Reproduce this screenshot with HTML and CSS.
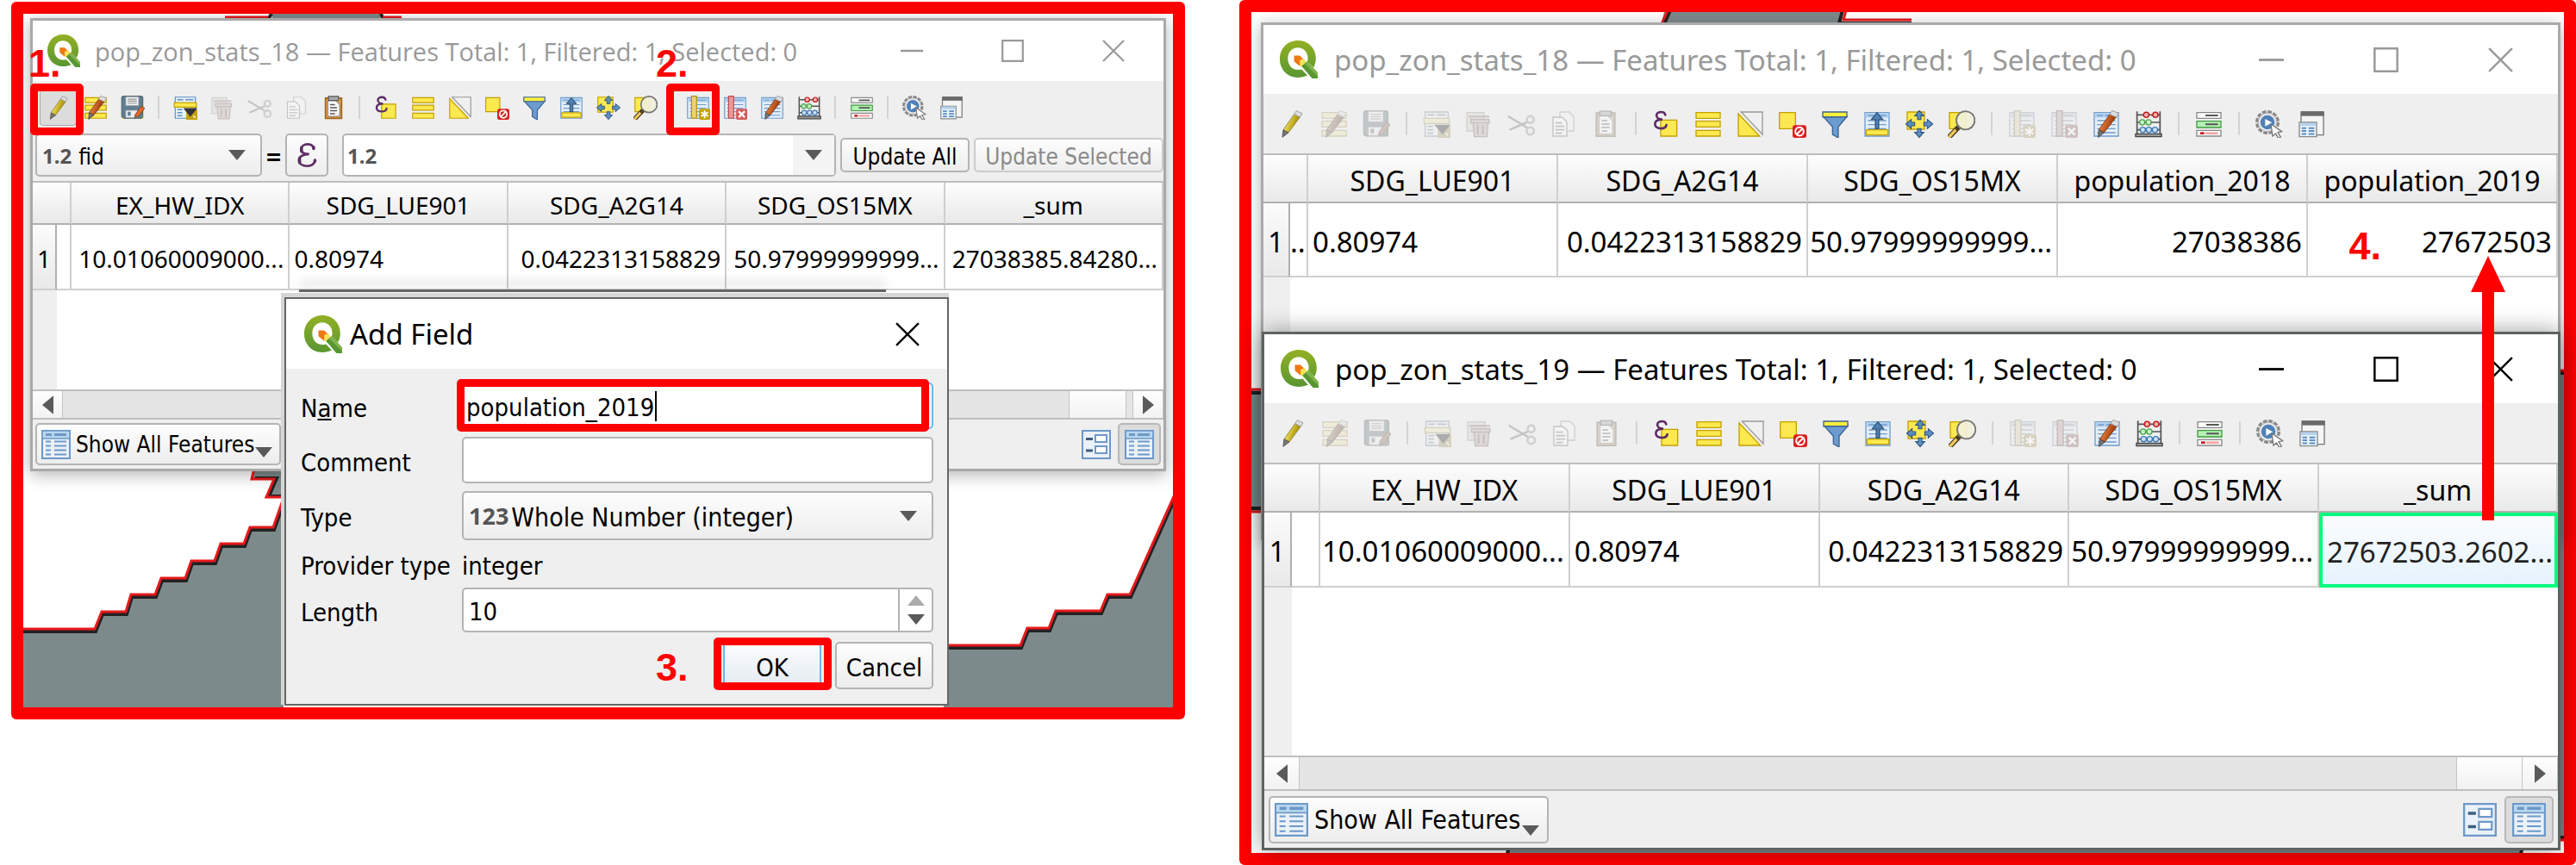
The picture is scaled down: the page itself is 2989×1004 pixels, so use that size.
FILE: index.html
```html
<!DOCTYPE html>
<html lang="en">
<head>
<meta charset="utf-8">
<title>Adding the population_2019 field</title>
<link rel="stylesheet" href="styles.css">
</head>
<body>
<svg class="sprite" aria-hidden="true">
  <defs>
    <linearGradient id="qgreen" x1="0" y1="0" x2="0" y2="1"><stop offset="0" stop-color="#93b023"/><stop offset="1" stop-color="#589632"/></linearGradient>
    <linearGradient id="barrel" x1="0" y1="0" x2="1" y2="0.4"><stop offset="0.2" stop-color="#f6ee6a"/><stop offset="0.8" stop-color="#b39a10"/></linearGradient>
    <linearGradient id="redbarrel" x1="0" y1="0" x2="1" y2="0.4"><stop offset="0.2" stop-color="#f08a4a"/><stop offset="0.8" stop-color="#a8430f"/></linearGradient>
  </defs>
  <symbol id="qgis" viewBox="0 0 40 40">
    <path fill="url(#qgreen)" fill-rule="evenodd" d="M19 0C30 0 38 8 38 19c0 4-1 7-2.500 9.500L29 22c.5-1 .6-2 .6-3.200C29.600 12 25 7.500 19 7.500S8.500 12 8.500 19.200 13 31 19 31c1.500 0 3-.2 4-.6l6 6.400C26 38.200 22.500 39 19 39 8 39 0 30.500 0 19.500S8 0 19 0z"/>
    <path fill="#ee7913" d="M15 16h6l5 5-5 6-6-5z"/>
    <path fill="#f9e05a" d="M21 21l4-2 4 5-5 5-3-3z"/>
    <path fill="#589632" d="M23 27l6-5 11 12v6h-6z"/>
    <path fill="#7fb44a" d="M26 24l3-2 11 12v4z"/>
  </symbol>
  <symbol id="min" viewBox="0 0 26 26"><path d="M0 13h26" stroke="currentColor" stroke-width="2.500"/></symbol>
  <symbol id="max" viewBox="0 0 26 26"><path d="M1.200 1.200h23.600v23.600H1.200z" fill="none" stroke="currentColor" stroke-width="2.200"/></symbol>
  <symbol id="close" viewBox="0 0 26 26"><path d="M1 1l24 24M25 1L1 25" stroke="currentColor" stroke-width="2.200"/></symbol>
  <symbol id="down" viewBox="0 0 20 12"><path d="M0 0h20L10 12z" fill="#5a5a5a"/></symbol>

  <symbol id="pencil" viewBox="0 0 24 24">
    <path fill="url(#barrel)" stroke="#8f8540" stroke-width=".7" d="M14 3.500l5 2.500L9 19.500 4.500 17z"/>
    <path fill="#ddd" stroke="#999" stroke-width=".7" d="M14 3.500L16 .5l5 2.300L19 6z"/>
    <path fill="#777" stroke="#555" stroke-width=".7" d="M4.500 17L9 19.500l-5.300 4z"/>
  </symbol>
  <symbol id="redpencil" viewBox="0 0 24 24">
    <path fill="url(#redbarrel)" stroke="#7c3a17" stroke-width=".7" d="M15 3.500l5.500 2.500L10 19.500 5.500 17z"/>
    <path fill="#ddd" stroke="#999" stroke-width=".7" d="M15 3.500L17 .3l6 2.300L20.500 6z"/>
    <path fill="#777" stroke="#444" stroke-width=".7" d="M5.500 17l4.500 2.500-5 4z"/>
  </symbol>
  <symbol id="bars" viewBox="0 0 24 24"><path fill="#fce94f" stroke="#c4a000" d="M1.500 2h21v5h-21zM1.500 9.500h21v5h-21zM1.500 17.500h21v5h-21z"/></symbol>
  <symbol id="multi" viewBox="0 0 24 24"><use href="#bars"/><use href="#redpencil"/></symbol>
  <symbol id="save" viewBox="0 0 24 24">
    <path fill="#fcf04f" d="M1 1h22v22H1z"/>
    <path fill="#5f7f95" stroke="#3d5666" stroke-width=".8" d="M1 2q0-1.500 1.500-1.500h18Q22 .5 22 2v19q0 1.500-1.500 1.500H3L1 21z"/>
    <path fill="#eee" stroke="#889" stroke-width=".6" d="M5 1h13v9H5zM5 14.500h12v7.500H5z"/>
    <path stroke="#999" d="M7 3.500h9M7 5.500h9M7 7.500h9"/><path fill="#5f7f95" d="M7 16h3v4H7z"/>
    <path fill="#e0682c" stroke="#7c3a17" stroke-width=".7" d="M20.500 10.500l3.500 2-7 9-3-2z"/><path fill="#666" d="M14 19.500l3 2-3.500 2z"/>
  </symbol>
  <symbol id="sheet" viewBox="0 0 24 24">
    <path fill="#e4eef8" stroke="#6f9ccb" d="M1.500 2h21v20.500h-21z"/><path fill="#b3d1ee" d="M2 2.500h20v4H2z"/>
    <path stroke="#6f9ccb" d="M4 4.500h5M11 4.500h9M4 9h16M4 12.500h16M4 16h16M4 19.500h16"/>
  </symbol>
  <symbol id="addrow" viewBox="0 0 24 24">
    <path fill="#eaf2fa" stroke="#5d8fc2" d="M2 1.500h20v21H2z"/><path stroke="#5d8fc2" stroke-width="1.300" d="M4 4h6M12 4h8M4 14h5M4 17h5M4 20h5"/>
    <path fill="#fce94f" stroke="#c4a000" d="M1 7h22v4.500H1z"/><path fill="#c4a000" d="M13 14h11v10H13z"/>
    <path fill="#333" d="M10 12.500h14l-7 8.500z"/><path stroke="#fff" stroke-width="1.200" d="M20 20l2 2"/>
  </symbol>
  <symbol id="trash" viewBox="0 0 24 24">
    <path fill="#d9d3c3" stroke="#aaa08c" d="M1.500 2h15v16h-15z"/><path stroke="#b5837d" stroke-width="2" d="M3 5.500h18"/>
    <path fill="#dca9a4" stroke="#a5605a" d="M5 8h16v3H5zM7 11h13l-1 12H8z"/><path stroke="#a5605a" stroke-width="1.500" d="M11 13v8M15.500 13v8"/>
  </symbol>
  <symbol id="cut" viewBox="0 0 24 24">
    <path fill="none" stroke="#777" stroke-width="1.800" d="M.5 5L18 15.500M2 17l16-7"/>
    <g fill="none" stroke="#999" stroke-width="2"><circle cx="20" cy="8" r="3"/><circle cx="20" cy="18" r="3.200"/></g>
  </symbol>
  <symbol id="copy" viewBox="0 0 24 24">
    <path fill="#f7f7f7" stroke="#999" d="M9 1.500h8l4 4V18H9z"/><path fill="#fff" stroke="#777" d="M3 6h8l4 4v12.500H3z"/>
    <path stroke="#777" stroke-width="1.200" d="M5 11h6M5 14h8M5 17h8M5 20h6"/>
  </symbol>
  <symbol id="paste" viewBox="0 0 24 24">
    <path fill="#d9a35a" stroke="#a5651c" stroke-width="1.500" d="M4 2.500h16v20H4z"/><path fill="#fff" stroke="#777" stroke-width=".7" d="M6.500 5H14l4 4v11.500H6.500z"/>
    <path fill="#aaa" stroke="#555" d="M7 .8h10v4H7z"/><path stroke="#555" stroke-width="1.200" d="M8.500 9h5M8.500 12h7M8.500 15h7M8.500 18h5"/>
  </symbol>
  <symbol id="eps" viewBox="0 0 24 26">
    <path fill="none" stroke="#5c2d62" stroke-width="2.400" stroke-linecap="round" d="M19.500 6C18.500 2 15.500 1.300 13 1.300 9 1.300 6 3.500 6 6.800S9 12 14.500 12C8 12 3.500 14.500 3.500 18.500s4 6.200 9 6.200c4 0 7.500-2 8.500-6"/>
    <path fill="none" stroke="#5c2d62" stroke-width="3.200" stroke-linecap="round" d="M6.300 5v4M4.300 16.500v4.500M19.300 4.500v1.500M20.700 18.500v1"/>
  </symbol>
  <symbol id="selexp" viewBox="0 0 24 24">
    <path fill="#fce94f" stroke="#c4a000" d="M7.500 8.500h14v14h-14z"/>
    <path fill="none" stroke="#5c2d62" stroke-width="2" stroke-linecap="round" d="M11.500 4C11 2 9.500 1.500 8 1.500 5.500 1.500 3.800 2.500 3.800 4.500S6 8 9 8C5 8 2.500 9.500 2.500 12s2.500 3.800 5.500 3.800c2.500 0 4-1 4.500-3"/>
  </symbol>
  <symbol id="invert" viewBox="0 0 24 24"><path fill="#fce94f" stroke="#c4a000" d="M1.500 3v19.500H20z"/><path fill="#f0f0f0" stroke="#999" d="M4 1.500h18.500V21z"/></symbol>
  <symbol id="desel" viewBox="0 0 24 24">
    <path fill="#fce94f" stroke="#c4a000" d="M.5 2h14v14H.5z"/><rect x="12" y="13" width="12" height="11" rx="2" fill="#dc2020"/>
    <circle cx="18" cy="18.500" r="3.600" fill="none" stroke="#fff" stroke-width="1.500"/><path stroke="#fff" stroke-width="1.500" d="M15.500 21l5-5"/>
  </symbol>
  <symbol id="funnel" viewBox="0 0 24 24">
    <path fill="#6c9bd0" stroke="#3b628f" d="M2 5.500l8 9V21l5 3v-9.500l7.500-9z"/><path fill="#fcee3f" stroke="#3b628f" d="M1.500 1.500h21v4.300h-21z"/>
  </symbol>
  <symbol id="totop" viewBox="0 0 24 24">
    <use href="#sheet"/><path fill="#fce94f" stroke="#c4a000" d="M2.500 17h19v4.500h-19z"/><path fill="#4d7fb3" stroke="#28486a" stroke-width=".8" d="M12 2l5 6h-3.500v8h-3V8H7z"/>
  </symbol>
  <symbol id="pan" viewBox="0 0 24 24">
    <path fill="#fce94f" stroke="#c4a000" d="M1.500 1.500h15v15h-15z"/>
    <path fill="#5d8fc2" stroke="#2c527c" stroke-width=".8" d="M12 .3l4 4.500h-2.500V8h-3V4.800H8zM12 23.700l4-4.500h-2.500V16h-3v3.200H8zM.3 12L5 8v2.500h3v3H5V16zM23.700 12L19 8v2.500h-3v3h3V16z"/>
  </symbol>
  <symbol id="zoomto" viewBox="0 0 24 24">
    <path fill="#fce94f" stroke="#c4a000" d="M1.500 2h14v14h-14z"/><path stroke="#4d3d20" stroke-width="4.500" d="M9.500 14.500L1 23.500"/><path stroke="#f0c860" stroke-width="2.500" d="M7 17l-6 6.500"/>
    <circle cx="15.500" cy="8.800" r="8" fill="#f1f0da" fill-opacity=".92" stroke="#777" stroke-width="1.400"/>
  </symbol>
  <symbol id="newfield" viewBox="0 0 24 24">
    <use href="#sheet"/><path fill="#ead46a" stroke="#b08f10" d="M5.500.5h5v22h-5z"/><rect x="13" y="13" width="11" height="11" rx="1.500" fill="#c4a000"/>
    <path stroke="#fff" stroke-width="1.600" d="M18.500 14.500v8M15 16.500l7 4M15 20.500l7-4"/>
  </symbol>
  <symbol id="delfield" viewBox="0 0 24 24">
    <use href="#sheet"/><path fill="#eb9a9a" stroke="#c24a4a" d="M5.500.5h5v22h-5z"/><rect x="13" y="13" width="11" height="11" rx="1.500" fill="#d65a5a"/>
    <path stroke="#fff" stroke-width="2" d="M15.500 15.500l6 6M21.500 15.500l-6 6"/>
  </symbol>
  <symbol id="edittable" viewBox="0 0 24 24"><use href="#sheet"/><use href="#redpencil"/></symbol>
  <symbol id="abacus" viewBox="0 0 24 24">
    <path fill="none" stroke="#555" stroke-width="1.300" d="M2 1v21M22 1v21M2 4h20M2 10.500h20M2 17h20"/><path fill="#999" stroke="#444" d="M.7 20.500h22.600V23H.7z"/>
    <g fill="#f3b1b1" stroke="#c21515"><circle cx="10" cy="4" r="2.300"/><circle cx="18" cy="4" r="2.300"/></g>
    <g fill="#c9f2c9" stroke="#4aa54a"><circle cx="6.500" cy="10.500" r="2.300"/><circle cx="12" cy="10.500" r="2.300"/></g>
    <g fill="#cfe2f5" stroke="#3d78b3"><circle cx="7" cy="17" r="2.300"/><circle cx="12.300" cy="17" r="2.300"/><circle cx="17.600" cy="17" r="2.300"/></g>
  </symbol>
  <symbol id="cond" viewBox="0 0 24 24">
    <path fill="#fff" stroke="#888" d="M1.500 2h21v5h-21zM1.500 17.500h21v5h-21z"/><path fill="#b5f2b5" stroke="#3f9c3f" d="M1.500 9.500h21v5.500h-21z"/>
    <path stroke="#555" stroke-width="1.500" d="M9 4.500h11M9 12.200h11"/><path stroke="#c21515" stroke-width="2" d="M4.500 20h3.500"/><path stroke="#f7a5a5" stroke-width="2" d="M9 20h11"/>
  </symbol>
  <symbol id="actions" viewBox="0 0 24 24">
    <circle cx="10.500" cy="10.500" r="9" fill="none" stroke="#888" stroke-width="3" stroke-dasharray="3.500 1.200"/><circle cx="10.500" cy="10.500" r="8.200" fill="#e9e9e9" stroke="#999" stroke-width=".6"/>
    <circle cx="10.500" cy="10.500" r="6.200" fill="#4f81b8"/><path fill="#fff" d="M8.500 7.500l6 3.200-6 3.300z"/>
    <path fill="#fff" stroke="#777" d="M13.500 12l9.500 6.500-3.500.8 2.500 4-2 1-2.300-4-2.700 2.200z"/>
  </symbol>
  <symbol id="dock" viewBox="0 0 24 24">
    <path fill="#f5f5f5" stroke="#777" d="M3 1.500h19.500v20H3z"/><path fill="#6a6a6a" d="M3 1h20v4H3z"/><path fill="#eaf3fb" stroke="#888" d="M1.500 10.500h15v12.500h-15z"/>
    <path fill="#b5d3f0" d="M2 11h14v2.500H2z"/><path stroke="#5d8fc2" stroke-width="1.500" d="M3.500 15.500h4M9.500 15.500h5M3.500 18h4M9.500 18h5M3.500 20.700h4M9.500 20.700h5"/>
  </symbol>
  <symbol id="formview" viewBox="0 0 34 34">
    <path fill="#eaf1f8" stroke="#6c99c8" stroke-width="2" d="M1 1h32v32H1z"/><path fill="#fff" stroke="#6c99c8" stroke-width="2" d="M16 6h13v8H16zM16 19h13v8H16z"/><path stroke="#3e5f80" stroke-width="3" d="M5 10.500h8M5 24h8"/>
  </symbol>
  <symbol id="tableview" viewBox="0 0 34 34">
    <path fill="#eaf1f8" stroke="#6c99c8" stroke-width="2" d="M1 1h32v32H1z"/><path fill="#b9d6ee" stroke="#6c99c8" stroke-width="1.500" d="M1 1h32v9H1z"/>
    <path stroke="#6c99c8" stroke-width="3" d="M5 5.500h7M15 5.500h14"/><path stroke="#6c99c8" stroke-width="1.800" d="M5 13.500h6M15 13.500h14M5 18.500h6M15 18.500h14M5 23.500h6M15 23.500h14M5 28.500h6M15 28.500h14"/>
  </symbol>
</svg>

<main class="board">
  <section class="figure figure-left" aria-label="Add the field">
    <svg class="map" aria-hidden="true">
      <path class="land" d="M289 0h125v8H289z"/><path class="rim" d="M233 7h51l4-7M440 7h-22l-3-7"/><path class="coast" d="M234 4h50M417 4h22"/>
      <g transform="translate(-27 -16)">
        <path class="land" d="M295 540l-3 16h26l-9 21h30v-40z"/><path class="land" d="M27 730h83l8-20h28l6-20h28l7-19h28l7-20h27l7-20h27l7-19h27l12-34v260H27z"/>
        <path class="rim" d="M27 733h84l8-20h28l6-20h28l7-19h28l7-20h27l7-20h27l7-19h27l12-34M296 555h25l-9 21h25"/>
        <path class="coast" d="M27 730h83l8-20h28l6-20h28l7-19h28l7-20h27l7-20h27l7-19h27l12-34M296 540l-4 16h26l-9 21h30"/>
        <path class="land" d="M1095 749h89l8-20h25l8-20h52l8-19h26l52-116v260h-268z"/>
        <path class="rim" d="M1095 752h90l8-20h25l8-20h52l8-19h26l52-116"/><path class="coast" d="M1095 749h89l8-20h25l8-20h52l8-19h26l52-116"/>
      </g>
    </svg>

    <article class="window small">
      <header class="titlebar">
        <svg class="logo"><use href="#qgis"/></svg><h2>pop_zon_stats_18 — Features Total: 1, Filtered: 1, Selected: 0</h2>
        <button class="wbtn" aria-label="Minimize"><svg><use href="#min"/></svg></button><button class="wbtn" aria-label="Maximize"><svg><use href="#max"/></svg></button><button class="wbtn" aria-label="Close"><svg><use href="#close"/></svg></button>
      </header>
      <nav class="toolbar">
        <button class="tool pressed" aria-label="Toggle editing"><svg><use href="#pencil"/></svg></button>
        <button class="tool" aria-label="Multi edit"><svg><use href="#multi"/></svg></button>
        <button class="tool" aria-label="Save edits"><svg><use href="#save"/></svg></button>
        <i class="sep"></i>
        <button class="tool" aria-label="Add feature"><svg><use href="#addrow"/></svg></button>
        <button class="tool" disabled aria-label="Delete"><svg><use href="#trash"/></svg></button>
        <button class="tool" disabled aria-label="Cut"><svg><use href="#cut"/></svg></button>
        <button class="tool" disabled aria-label="Copy"><svg><use href="#copy"/></svg></button>
        <button class="tool" aria-label="Paste"><svg><use href="#paste"/></svg></button>
        <i class="sep"></i>
        <button class="tool" aria-label="Select by expression"><svg><use href="#selexp"/></svg></button>
        <button class="tool" aria-label="Select all"><svg><use href="#bars"/></svg></button>
        <button class="tool" aria-label="Invert selection"><svg><use href="#invert"/></svg></button>
        <button class="tool" aria-label="Deselect all"><svg><use href="#desel"/></svg></button>
        <button class="tool" aria-label="Filter"><svg><use href="#funnel"/></svg></button>
        <button class="tool" aria-label="Move selection to top"><svg><use href="#totop"/></svg></button>
        <button class="tool" aria-label="Pan to selection"><svg><use href="#pan"/></svg></button>
        <button class="tool" aria-label="Zoom to selection"><svg><use href="#zoomto"/></svg></button>
        <i class="sep"></i>
        <button class="tool" aria-label="New field"><svg><use href="#newfield"/></svg></button>
        <button class="tool" aria-label="Delete field"><svg><use href="#delfield"/></svg></button>
        <button class="tool" aria-label="Organize columns"><svg><use href="#edittable"/></svg></button>
        <button class="tool" aria-label="Field calculator"><svg><use href="#abacus"/></svg></button>
        <i class="sep"></i>
        <button class="tool" aria-label="Conditional formatting"><svg><use href="#cond"/></svg></button>
        <i class="sep"></i>
        <button class="tool" aria-label="Actions"><svg><use href="#actions"/></svg></button>
        <button class="tool" aria-label="Dock table"><svg><use href="#dock"/></svg></button>
      </nav>
      <div class="calc">
        <label class="box combo fieldpick"><b class="kind">1.2</b><select aria-label="Field"><option>fid</option></select><svg class="down"><use href="#down"/></svg></label>
        <span class="equals">=</span>
        <button class="box epsilon" aria-label="Expression"><svg><use href="#eps"/></svg></button>
        <label class="box combo expr"><b class="kind">1.2</b><input type="text" aria-label="Expression value"><span class="drop"><svg class="down"><use href="#down"/></svg></span></label>
        <button class="box update all">Update All</button>
        <button class="box update" disabled>Update Selected</button>
      </div>
      <table>
        <colgroup><col class="num"><col class="stub"><col><col><col><col><col></colgroup>
        <thead><tr><th colspan="2"></th><th>EX_HW_IDX</th><th>SDG_LUE901</th><th>SDG_A2G14</th><th>SDG_OS15MX</th><th>_sum</th></tr></thead>
        <tbody><tr><th>1</th><td></td><td>10.01060009000...</td><td class="text">0.80974</td><td>0.0422313158829</td><td>50.97999999999...</td><td>27038385.84280...</td></tr></tbody>
      </table>
      <div class="empty"></div>
      <div class="scroll"><button aria-label="Scroll left"><svg viewBox="0 0 12 20"><path d="M12 0v20L0 10z" fill="#5a5a5a"/></svg></button><span class="track"></span><span class="thumb"></span><span class="gap"></span><button aria-label="Scroll right"><svg viewBox="0 0 12 20"><path d="M0 0v20l12-10z" fill="#5a5a5a"/></svg></button></div>
      <footer class="status">
        <button class="box showall"><svg class="view"><use href="#tableview"/></svg>Show All Features<svg class="down low"><use href="#down"/></svg></button>
        <button class="viewbtn" aria-label="Form view"><svg class="view"><use href="#formview"/></svg></button><button class="viewbtn on" aria-label="Table view"><svg class="view"><use href="#tableview"/></svg></button>
      </footer>
    </article>

    <div class="under-edge"></div>
    <form class="dialog" onsubmit="return false">
      <header class="titlebar"><svg class="logo"><use href="#qgis"/></svg><h2>Add Field</h2><button type="button" class="wbtn" aria-label="Close"><svg><use href="#close"/></svg></button></header>
      <div class="form">
        <label for="name">N<u>a</u>me</label><input id="name" class="box focus" type="text" value="population_2019">
        <label for="comment">Comment</label><input id="comment" class="box" type="text">
        <label for="type">Type</label><span class="box combo"><b class="kind">123</b><select id="type"><option>Whole Number (integer)</option></select><svg class="down"><use href="#down"/></svg></span>
        <span>Provider type</span><span>integer</span>
        <label for="length">Length</label><span class="box spin"><input id="length" type="text" value="10"><span class="steps"><svg class="down up"><use href="#down"/></svg><svg class="down"><use href="#down"/></svg></span></span>
      </div>
      <div class="actions"><button class="box ok">OK</button><button class="box" type="button">Cancel</button></div>
    </form>
    <i class="caret"></i>
    <i class="mark m-edit"></i><i class="mark m-new"></i><i class="mark m-name"></i><i class="mark m-ok"></i>
    <b class="step s1">1.</b><b class="step s2">2.</b><b class="step s3">3.</b>
  </section>

  <section class="figure figure-right" aria-label="Copy the value">
    <svg class="map" aria-hidden="true">
      <g transform="translate(-1452 -14)">
        <path class="land" d="M1932 10h208l-5 20h-208zM1440 452h40v142h-40zM2960 430h30v545h-30zM1750 980h1175v15H1750z"/>
        <path class="rim" d="M1938 12l-8 18M2138 12l-4 15h84M1440 456h40M1440 590h40M2960 433h30M2960 972h30M1752 980l-4 14M2928 980l-4 14"/>
        <path class="coast" d="M1935 12l-8 18M2142 12l-3 11h79M1440 452h40M1440 594h40M2960 430h30M2960 975h30"/>
      </g>
    </svg>
    <article class="window back">
      <header class="titlebar">
        <svg class="logo"><use href="#qgis"/></svg><h2>pop_zon_stats_18 — Features Total: 1, Filtered: 1, Selected: 0</h2>
        <button class="wbtn" aria-label="Minimize"><svg><use href="#min"/></svg></button><button class="wbtn" aria-label="Maximize"><svg><use href="#max"/></svg></button><button class="wbtn" aria-label="Close"><svg><use href="#close"/></svg></button>
      </header>
      <nav class="toolbar">
        <button class="tool" aria-label="Toggle editing"><svg><use href="#pencil"/></svg></button>
        <button class="tool" disabled aria-label="Multi edit"><svg><use href="#multi"/></svg></button>
        <button class="tool" disabled aria-label="Save edits"><svg><use href="#save"/></svg></button>
        <i class="sep"></i>
        <button class="tool" disabled aria-label="Add feature"><svg><use href="#addrow"/></svg></button>
        <button class="tool" disabled aria-label="Delete"><svg><use href="#trash"/></svg></button>
        <button class="tool" disabled aria-label="Cut"><svg><use href="#cut"/></svg></button>
        <button class="tool" disabled aria-label="Copy"><svg><use href="#copy"/></svg></button>
        <button class="tool" disabled aria-label="Paste"><svg><use href="#paste"/></svg></button>
        <i class="sep"></i>
        <button class="tool" aria-label="Select by expression"><svg><use href="#selexp"/></svg></button>
        <button class="tool" aria-label="Select all"><svg><use href="#bars"/></svg></button>
        <button class="tool" aria-label="Invert selection"><svg><use href="#invert"/></svg></button>
        <button class="tool" aria-label="Deselect all"><svg><use href="#desel"/></svg></button>
        <button class="tool" aria-label="Filter"><svg><use href="#funnel"/></svg></button>
        <button class="tool" aria-label="Move selection to top"><svg><use href="#totop"/></svg></button>
        <button class="tool" aria-label="Pan to selection"><svg><use href="#pan"/></svg></button>
        <button class="tool" aria-label="Zoom to selection"><svg><use href="#zoomto"/></svg></button>
        <i class="sep"></i>
        <button class="tool" disabled aria-label="New field"><svg><use href="#newfield"/></svg></button>
        <button class="tool" disabled aria-label="Delete field"><svg><use href="#delfield"/></svg></button>
        <button class="tool" aria-label="Organize columns"><svg><use href="#edittable"/></svg></button>
        <button class="tool" aria-label="Field calculator"><svg><use href="#abacus"/></svg></button>
        <i class="sep"></i>
        <button class="tool" aria-label="Conditional formatting"><svg><use href="#cond"/></svg></button>
        <i class="sep"></i>
        <button class="tool" aria-label="Actions"><svg><use href="#actions"/></svg></button>
        <button class="tool" aria-label="Dock table"><svg><use href="#dock"/></svg></button>
      </nav>
      <table>
        <colgroup><col class="num"><col class="stub"><col><col><col><col><col></colgroup>
        <thead><tr><th colspan="2"></th><th>SDG_LUE901</th><th>SDG_A2G14</th><th>SDG_OS15MX</th><th>population_2018</th><th>population_2019</th></tr></thead>
        <tbody><tr><th>1</th><td>..</td><td class="text">0.80974</td><td>0.0422313158829</td><td>50.97999999999...</td><td>27038386</td><td>27672503</td></tr></tbody>
      </table>
      <div class="empty"></div>
    </article>

    <article class="window front">
      <header class="titlebar">
        <svg class="logo"><use href="#qgis"/></svg><h2>pop_zon_stats_19 — Features Total: 1, Filtered: 1, Selected: 0</h2>
        <button class="wbtn" aria-label="Minimize"><svg><use href="#min"/></svg></button><button class="wbtn" aria-label="Maximize"><svg><use href="#max"/></svg></button><button class="wbtn" aria-label="Close"><svg><use href="#close"/></svg></button>
      </header>
      <nav class="toolbar">
        <button class="tool" aria-label="Toggle editing"><svg><use href="#pencil"/></svg></button>
        <button class="tool" disabled aria-label="Multi edit"><svg><use href="#multi"/></svg></button>
        <button class="tool" disabled aria-label="Save edits"><svg><use href="#save"/></svg></button>
        <i class="sep"></i>
        <button class="tool" disabled aria-label="Add feature"><svg><use href="#addrow"/></svg></button>
        <button class="tool" disabled aria-label="Delete"><svg><use href="#trash"/></svg></button>
        <button class="tool" disabled aria-label="Cut"><svg><use href="#cut"/></svg></button>
        <button class="tool" disabled aria-label="Copy"><svg><use href="#copy"/></svg></button>
        <button class="tool" disabled aria-label="Paste"><svg><use href="#paste"/></svg></button>
        <i class="sep"></i>
        <button class="tool" aria-label="Select by expression"><svg><use href="#selexp"/></svg></button>
        <button class="tool" aria-label="Select all"><svg><use href="#bars"/></svg></button>
        <button class="tool" aria-label="Invert selection"><svg><use href="#invert"/></svg></button>
        <button class="tool" aria-label="Deselect all"><svg><use href="#desel"/></svg></button>
        <button class="tool" aria-label="Filter"><svg><use href="#funnel"/></svg></button>
        <button class="tool" aria-label="Move selection to top"><svg><use href="#totop"/></svg></button>
        <button class="tool" aria-label="Pan to selection"><svg><use href="#pan"/></svg></button>
        <button class="tool" aria-label="Zoom to selection"><svg><use href="#zoomto"/></svg></button>
        <i class="sep"></i>
        <button class="tool" disabled aria-label="New field"><svg><use href="#newfield"/></svg></button>
        <button class="tool" disabled aria-label="Delete field"><svg><use href="#delfield"/></svg></button>
        <button class="tool" aria-label="Organize columns"><svg><use href="#edittable"/></svg></button>
        <button class="tool" aria-label="Field calculator"><svg><use href="#abacus"/></svg></button>
        <i class="sep"></i>
        <button class="tool" aria-label="Conditional formatting"><svg><use href="#cond"/></svg></button>
        <i class="sep"></i>
        <button class="tool" aria-label="Actions"><svg><use href="#actions"/></svg></button>
        <button class="tool" aria-label="Dock table"><svg><use href="#dock"/></svg></button>
      </nav>
      <table>
        <colgroup><col class="num"><col class="stub"><col><col><col><col><col class="last"></colgroup>
        <thead><tr><th colspan="2"></th><th>EX_HW_IDX</th><th>SDG_LUE901</th><th>SDG_A2G14</th><th>SDG_OS15MX</th><th>_sum</th></tr></thead>
        <tbody><tr><th>1</th><td></td><td>10.01060009000...</td><td class="text">0.80974</td><td>0.0422313158829</td><td>50.97999999999...</td><td class="current">27672503.2602...</td></tr></tbody>
      </table>
      <div class="empty"></div>
      <div class="scroll"><button aria-label="Scroll left"><svg viewBox="0 0 12 20"><path d="M12 0v20L0 10z" fill="#5a5a5a"/></svg></button><span class="track"></span><span class="thumb"></span><button aria-label="Scroll right"><svg viewBox="0 0 12 20"><path d="M0 0v20l12-10z" fill="#5a5a5a"/></svg></button></div>
      <footer class="status">
        <button class="box showall"><svg class="view"><use href="#tableview"/></svg>Show All Features<svg class="down low"><use href="#down"/></svg></button>
        <button class="viewbtn" aria-label="Form view"><svg class="view"><use href="#formview"/></svg></button><button class="viewbtn on" aria-label="Table view"><svg class="view"><use href="#tableview"/></svg></button>
      </footer>
    </article>
    <b class="step s4">4.</b>
    <svg class="arrow" viewBox="0 0 42 307" aria-hidden="true"><path fill="#f00" d="M21 0l20 42H28v265H14V42H1z"/></svg>
  </section>
</main>
</body>
</html>
```
FILE: styles.css
```css
* { box-sizing: border-box; }
body { margin: 0; background: #fff; color: #000; }
button, input, select { font: inherit; color: inherit; margin: 0; padding: 0; border: 0; background: none; appearance: none; }
.sprite { position: absolute; width: 0; height: 0; }
h2 { margin: 0; font-weight: 400; white-space: nowrap; }

.board {
  display: grid;
  grid-template-columns: 1362fr 1551fr;
  gap: 63px;
  align-items: start;
  padding-left: 13px;
}
.figure {
  position: relative;
  border: 14px solid #f00;
  border-radius: 6px;
  background: #fff;
}
.figure-left { margin-top: 2px; min-height: 833px; padding: 5px 8px; }
.figure-right { min-height: 1004px; padding: 12px 4px 0 11px; }
.map { position: absolute; inset: 0; width: 100%; height: 100%; }
.land { fill: #7d8a8c; }
.rim { fill: none; stroke: #222; stroke-width: 4px; }
.coast { fill: none; stroke: #e8191c; stroke-width: 3px; }

/* attribute table windows */
.window {
  --title: 80px; --tools: 69px; --pitch: 49px; --sep: 21px; --icon: 32px;
  --logo: 44px; --inset: 19px; --ctl: 29px; --ctlw: 133px;
  --head: 58px; --row: 86px; --num: 31px; --stub: 21px;
  --bar: 41px; --arrowbtn: 41px; --thumb: 77px; --view: 39px; --viewbtn: 57px;
  position: relative;
  display: flex;
  flex-direction: column;
  border: 3px solid #a9a9a9;
  background: #efefef;
  box-shadow: 0 4px 18px rgba(0, 0, 0, .3);
  font: 32px "Noto Sans", "Open Sans", sans-serif;
}
.small {
  --title: 70px; --tools: 61px; --pitch: 43px; --sep: 18px; --icon: 28px;
  --logo: 38px; --inset: 17px; --ctl: 26px; --ctlw: 117px;
  --head: 51px; --row: 76px; --num: 28px; --stub: 17px;
  --bar: 35px; --arrowbtn: 35px; --thumb: 67px; --view: 34px; --viewbtn: 50px;
  font-size: 28px;
  height: 526px;
}
.back { height: 601px; }
.front {
  --num: 32px; --stub: 33px; --row: 87px;
  position: absolute;
  top: 371px; bottom: 3px; left: 12px; right: 4px;
  border-color: #5d6263;
  box-shadow: 0 0 26px rgba(0, 0, 0, .4);
}

.titlebar { display: flex; align-items: center; flex: none; height: var(--title); padding-left: var(--inset); gap: var(--inset); background: #fff; color: #999; }
.titlebar h2 { flex: 1; font-size: 33px; }
.small .titlebar h2 { font-size: 29px; font-family: "Open Sans", "Noto Sans", sans-serif; }
.front .titlebar { color: #000; }
.logo { width: var(--logo); height: var(--logo); flex: none; }
.wbtn { width: var(--ctlw); height: 100%; display: grid; place-items: center; margin-left: calc(var(--inset) * -1); }
.wbtn svg { width: var(--ctl); height: var(--ctl); }

.toolbar { display: flex; align-items: center; flex: none; height: var(--tools); padding-left: 8px; }
.tool { width: var(--pitch); height: var(--pitch); flex: none; display: grid; place-items: center; }
.tool svg { width: var(--icon); height: var(--icon); }
.tool:disabled svg { opacity: .35; filter: grayscale(.7); }
.tool.pressed { background: #dcdcdc; border: 1px solid #aaa; border-radius: 4px; }
.sep { width: var(--sep); height: 27px; flex: none; background: linear-gradient(#d4d4d4, #d4d4d4) center / 2px 100% no-repeat; }

.box { border: 2px solid #b4b4b4; border-radius: 5px; background: linear-gradient(#fdfdfd, #ededed); font-family: "DejaVu Sans Condensed", "DejaVu Sans", sans-serif; white-space: nowrap; }
.calc { display: flex; align-items: center; flex: none; height: 55px; padding: 0 0 5px 3px; font-size: 26px; font-family: "DejaVu Sans Condensed", "DejaVu Sans", sans-serif; }
.calc .combo, .epsilon { height: 50px; }
.combo { display: flex; align-items: center; }
.combo select, .combo input { flex: 1; min-width: 0; height: 100%; padding-top: 4px; outline: 0; }
.fieldpick { width: 263px; padding: 0 17px 0 6px; gap: 8px; }
.kind { font: 700 24px "Noto Sans", sans-serif; color: #555; }
.down { width: 20px; height: 12px; flex: none; }
.equals { width: 27px; text-align: center; padding-top: 4px; font-weight: 700; }
.epsilon { width: 50px; margin-right: 16px; display: grid; place-items: center; }
.epsilon svg { width: 26px; height: 30px; }
.expr { flex: 1; background: #fff; padding-left: 4px; margin-right: 5px; }
.drop { width: 48px; height: 100%; display: grid; place-items: center; background: #f4f4f4; }
.update { width: 220px; height: 40px; padding-top: 3px; }
.update.all { width: 150px; margin-right: 5px; }
.update:disabled { color: #8a8a8a; border-color: #ccc; }

table { width: 100%; flex: none; table-layout: fixed; border-collapse: separate; border-spacing: 0; border-top: 2px solid #bdbdbd; background: #fff; }
.num { width: var(--num); }
.stub { width: var(--stub); }
.last { width: 277px; }
th, td { padding: 0; font-weight: 400; white-space: nowrap; border-right: 2px solid #cfcfcf; border-bottom: 2px solid #cfcfcf; }
thead th { height: calc(var(--head) - 2px); padding-top: 4px; background: linear-gradient(#fdfdfd, #e9e9e9); border-bottom-color: #b0b0b0; }
tbody th { height: var(--row); padding-top: 4px; background: linear-gradient(#fbfbfb, #e9e9e9); border-right-color: #b0b0b0; }
td { text-align: right; padding: 4px 5px 0 0; }
.back td, .front td { font-size: 33px; }
td:nth-child(2) { text-align: left; padding: 4px 0 0; }
td.text { text-align: left; padding-left: 5px; }
td.current { border: 4px solid #00fa7d; background: linear-gradient(#fbfdff, #e5f2fc); padding-right: 2px; color: #222; }
.empty { flex: 1; background: linear-gradient(#efefef, #efefef) left / var(--num) 100% no-repeat #fff; }

.scroll { display: flex; flex: none; height: var(--bar); border: solid #bfbfbf; border-width: 2px 0; background: #e5e5e5; }
.scroll button, .thumb { background: linear-gradient(#fefefe, #f2f2f2); border-right: 1px solid #c4c4c4; }
.scroll button { width: var(--arrowbtn); display: grid; place-items: center; }
.scroll button svg { width: 13px; height: 22px; }
.track { flex: 1; }
.thumb { width: var(--thumb); border-left: 1px solid #c4c4c4; }
.gap { width: 8px; border-right: 1px solid #c4c4c4; }

.status { display: flex; align-items: center; flex: none; height: 66px; padding: 0 5px; }
.small .status { height: 57px; padding: 0 3px; }
.showall { display: flex; align-items: center; width: 325px; height: 55px; margin-right: auto; padding-left: 5px; gap: 7px; font-size: 30px; }
.small .showall { width: 285px; height: 49px; font-size: 26px; gap: 6px; }
.view { width: var(--view); height: var(--view); flex: none; }
.low { align-self: flex-end; margin: 0 0 7px -5px; }
.viewbtn { width: var(--viewbtn); height: 55px; display: grid; place-items: center; }
.small .viewbtn { height: 49px; }
.viewbtn.on { border: 2px solid #b8b8b8; border-radius: 5px; background: #dcdcdc; }

/* dialog over the table window */
.under-edge { position: absolute; left: 320px; right: 333px; top: 320px; height: 3px; background: #666; box-shadow: 0 -8px 12px rgba(0, 0, 0, .25); }
.dialog {
  --title: 81px; --inset: 21px; --logo: 44px; --ctl: 28px; --ctlw: 92px;
  position: absolute;
  left: 303px; right: 260px; top: 329px;
  border: 2px solid #666;
  background: #efefef;
  box-shadow: -2px -3px 0 2px #d6d6d6;
  font: 29px "DejaVu Sans Condensed", "DejaVu Sans", sans-serif;
}
.dialog .titlebar { color: #000; gap: 9px; }
.dialog h2 { font-family: "Noto Sans", "Open Sans", sans-serif; }
.form { display: grid; grid-template-columns: 187px 1fr; grid-template-rows: 54px 54px 57px 37px 52px; row-gap: 9px; padding: 16px 16px 11px 17px; align-items: stretch; }
.form > label, .form > span:not(.box) { display: block; align-self: center; padding-top: 5px; font-size: 29px; line-height: 34px; white-space: nowrap; }
.form > .box { min-width: 0; background: #fff; padding-left: 6px; font-size: 29px; }
.form > input.box { padding: 4px 0 0 3px; outline: 0; }
.form > .focus { border-color: #6cb6f0; }
.form > .combo { background: linear-gradient(#fdfdfd, #ededed); padding-right: 17px; font-size: 30px; }
.form .kind { font-size: 27px; margin-right: 3px; }
.spin { display: flex; }
.spin input { flex: 1; min-width: 0; padding-top: 4px; outline: 0; }
.steps { width: 39px; border-left: 2px solid #b4b4b4; display: flex; flex-direction: column; align-items: center; justify-content: center; gap: 10px; }
.up { transform: rotate(180deg); opacity: .5; }
.actions { display: flex; justify-content: flex-end; gap: 16px; padding: 0 16px 17px; }
.actions .box { width: 114px; height: 55px; padding-top: 4px; }
.actions .ok { border-color: #6cb6f0; background: linear-gradient(#fbfdff, #e3eaf0); }
.caret { position: absolute; left: 733px; top: 438px; width: 2px; height: 35px; background: #000; }

/* tutorial annotations */
.mark { position: absolute; border: 9px solid #f00; border-radius: 5px; width: 62px; height: 60px; top: 81px; }
.m-edit { left: 8px; }
.m-new { left: 746px; }
.m-name { left: 503px; right: 283px; top: 424px; width: auto; height: 61px; }
.m-ok { right: 396px; top: 724px; width: 137px; height: 61px; }
.step { position: absolute; color: #f00; font: 700 45px/50px "Liberation Sans", Arial, sans-serif; }
.s1 { left: 6px; top: 33px; }
.s2 { left: 734px; top: 33px; }
.s3 { left: 734px; top: 734px; }
.s4 { right: 212px; top: 247px; }
.arrow { position: absolute; right: 67px; top: 283px; width: 42px; height: 307px; }
```
